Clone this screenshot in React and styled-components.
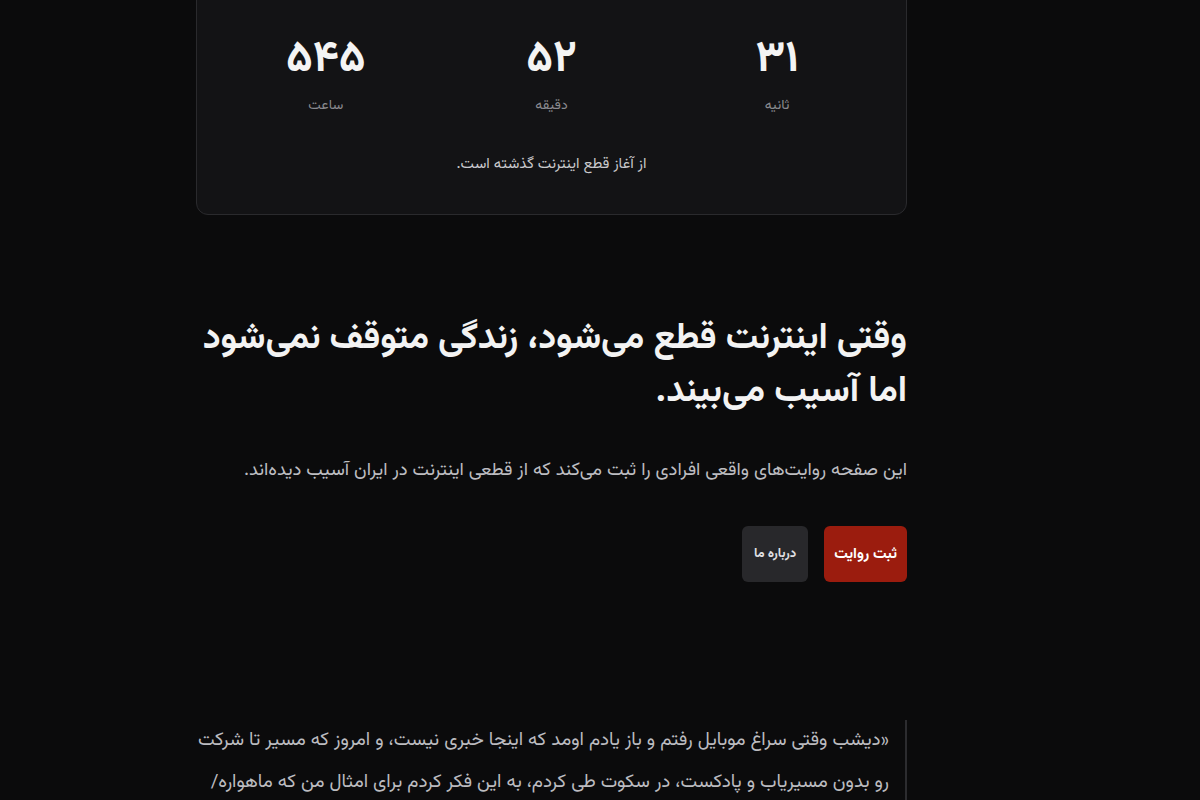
import styled, { createGlobalStyle } from "styled-components";

const GlobalStyle = createGlobalStyle`
  html, body {
    margin: 0;
    padding: 0;
    background: #0b0b0c;
    color: #f2f2f2;
    font-family: "Vazirmatn", "Noto Sans Arabic", "DejaVu Sans", sans-serif;
    overflow: hidden;
  }
`;

const Page = styled.main`
  direction: rtl;
  width: 711px;
  margin: -24px 0 0 196px;
`;

const TimerCard = styled.section`
  background: #131315;
  border: 1px solid #2a2a2d;
  border-radius: 12px;
  padding: 58px 16px 38px;
  text-align: center;
`;

const TimerGrid = styled.div`
  display: grid;
  grid-template-columns: repeat(3, 1fr);
`;

const Unit = styled.div`
  display: flex;
  flex-direction: column;
  align-items: center;
`;

const Num = styled.div`
  font-size: 44px;
  font-weight: 700;
  line-height: 52px;
  color: #f4f4f4;
`;

const UnitLabel = styled.div`
  margin-top: 8px;
  font-size: 14px;
  color: #8a8a8f;
`;

const Since = styled.p`
  margin: 36px 0 0;
  font-size: 15px;
  color: #c9c9cc;
`;

const Hero = styled.section`
  padding-top: 98px;
`;

const Title = styled.h1`
  margin: 0;
  font-size: 36px;
  line-height: 53px;
  font-weight: 700;
  color: #f3f3f3;
  letter-spacing: -0.5px;
  white-space: nowrap;
`;

const Lead = styled.p`
  margin: 37px 0 0;
  font-size: 18.5px;
  line-height: 30px;
  color: #bdbdc1;
`;

const Actions = styled.div`
  display: flex;
  gap: 16px;
  margin-top: 40px;
`;

const Button = styled.button`
  height: 56px;
  padding: 0 ${(p) => (p.$primary ? "10px" : "12px")};
  border: none;
  border-radius: 6px;
  font-family: inherit;
  font-size: ${(p) => (p.$primary ? "15px" : "13px")};
  font-weight: 700;
  color: ${(p) => (p.$primary ? "#ffffff" : "#e0e0e3")};
  background: ${(p) => (p.$primary ? "#9b1c0e" : "#28282b")};
  cursor: pointer;
`;

const Quote = styled.blockquote`
  margin: 138px 0 0;
  padding: 0 16px 0 0;
  border-right: 2px solid #2c2c2f;
  font-size: 18.8px;
  line-height: 42px;
  color: #bcbcc0;
`;

const units = [
  { value: "۳۱", label: "ثانیه" },
  { value: "۵۲", label: "دقیقه" },
  { value: "۵۴۵", label: "ساعت" },
];

export default function App() {
  return (
    <>
      <GlobalStyle />
      <Page>
        <TimerCard>
          <TimerGrid>
            {units.map((u) => (
              <Unit key={u.label}>
                <Num>{u.value}</Num>
                <UnitLabel>{u.label}</UnitLabel>
              </Unit>
            ))}
          </TimerGrid>
          <Since>از آغاز قطع اینترنت گذشته است.</Since>
        </TimerCard>

        <Hero>
          <Title>
            وقتی اینترنت قطع می‌شود، زندگی متوقف نمی‌شود
            <br />
            اما آسیب می‌بیند.
          </Title>
          <Lead>
            این صفحه روایت‌های واقعی افرادی را ثبت می‌کند که از قطعی اینترنت در
            ایران آسیب دیده‌اند.
          </Lead>
          <Actions>
            <Button $primary>ثبت روایت</Button>
            <Button>درباره ما</Button>
          </Actions>
        </Hero>

        <Quote>
          «دیشب وقتی سراغ موبایل رفتم و باز یادم اومد که اینجا خبری نیست، و
          امروز که مسیر تا شرکت رو بدون مسیریاب و پادکست، در سکوت طی کردم، به
          این فکر کردم برای امثال من که ماهواره/ فیلترشکن ندارند، دنیا چقدر
          کوچک شده است.»
        </Quote>
      </Page>
    </>
  );
}
